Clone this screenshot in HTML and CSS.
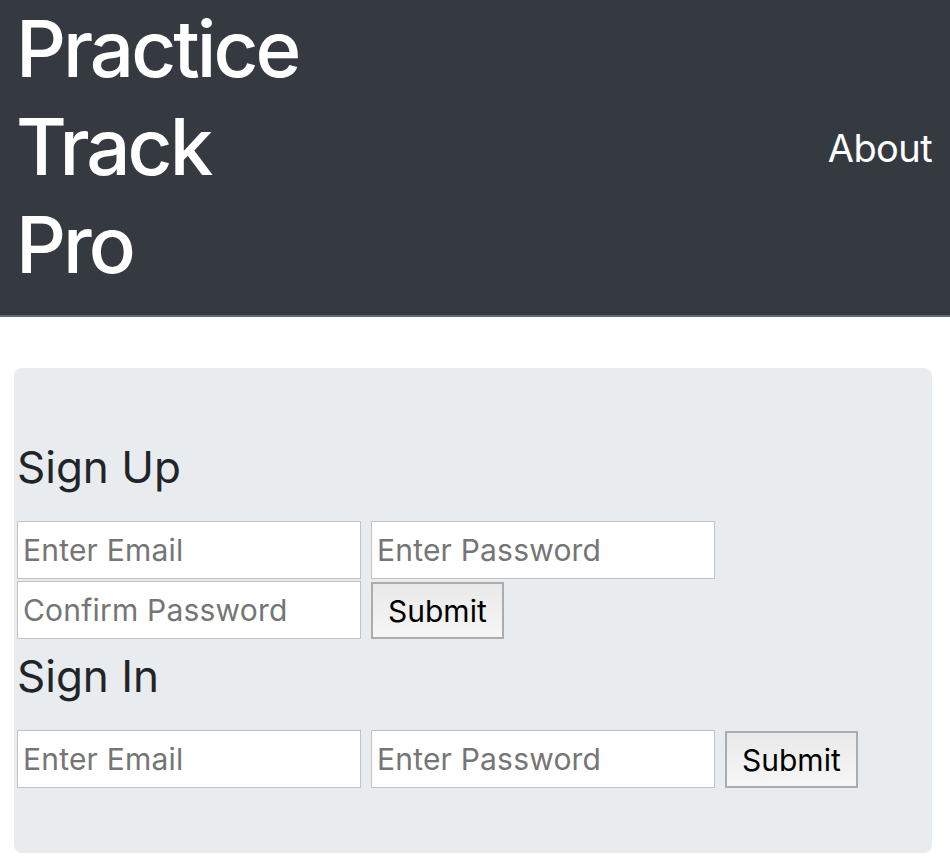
FILE: index.html
```html
<!DOCTYPE html>
<html lang="en">
<head>
<meta charset="utf-8">
<title>Practice Track Pro</title>
<link rel="stylesheet" href="styles.css">
</head>
<body>
<header class="navbar">
  <a class="brand" href="#">Practice<br>Track<br>Pro</a>
  <a class="nav-link" href="#">About</a>
</header>
<main class="jumbotron">
  <h3 class="form-title">Sign Up</h3>
  <form class="form-row">
    <input class="field" type="email" placeholder="Enter Email">
    <input class="field" type="password" placeholder="Enter Password">
    <input class="field" type="password" placeholder="Confirm Password">
    <button class="submit" type="button">Submit</button>
  </form>
  <h3 class="form-title second">Sign In</h3>
  <form class="form-row">
    <input class="field" type="email" placeholder="Enter Email">
    <input class="field" type="password" placeholder="Enter Password">
    <button class="submit" type="button">Submit</button>
  </form>
</main>
</body>
</html>
```
FILE: styles.css
```css
* { box-sizing: border-box; }
html, body { margin: 0; padding: 0; background: #fff; }
body {
  font-family: Inter, "Liberation Sans", Arial, sans-serif;
  color: #212529;
  width: 950px;
}
.navbar {
  display: flex;
  justify-content: space-between;
  align-items: center;
  background: #343a40;
  padding: 0 18px 21px 16px;
  border-bottom: 2px solid #5a6a82;
}
.brand {
  display: block;
  color: #fff;
  text-decoration: none;
  font-size: 78px;
  line-height: 98px;
  font-weight: 500;
  letter-spacing: -3px;
}
.nav-link {
  margin-top: 2px;
  color: #fff;
  text-decoration: none;
  font-size: 38px;
  line-height: 46px;
  letter-spacing: -0.6px;
}
.jumbotron {
  background: #e9ecef;
  border-radius: 8px;
  margin: 51px 18px 0 14px;
  padding: 72px 0 65px 3px;
}
.form-title {
  margin: 0 0 26px 0;
  font-size: 44px;
  line-height: 55px;
  font-weight: 400;
}
.form-title.second { margin-top: 10px; }
.form-row {
  display: flex;
  flex-wrap: wrap;
  column-gap: 10px;
  row-gap: 2px;
  align-items: flex-end;
}
.field {
  width: 344px;
  height: 58px;
  border: 1px solid #c2c2c2;
  background: #fff;
  font-family: inherit;
  font-size: 30px;
  letter-spacing: 0.2px;
  padding: 0 5px;
  color: #333;
  margin: 0;
}
.field::placeholder { color: #757575; }
.submit {
  height: 57px;
  padding: 0 15px;
  font-family: inherit;
  font-size: 30px;
  color: #000;
  border: 2px solid #acacac;
  background: linear-gradient(#e9e9e9, #f6f6f6);
  margin: 0;
}
```
